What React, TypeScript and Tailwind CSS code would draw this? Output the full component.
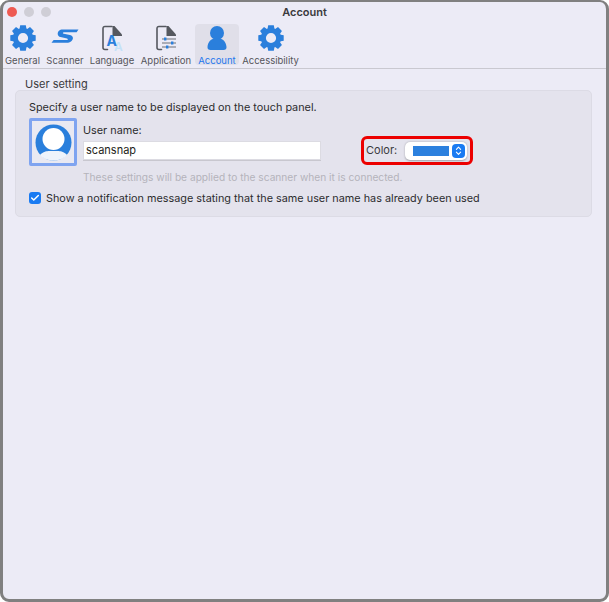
import { Check, ChevronDown, ChevronUp } from "lucide-react";

const BLUE = "#2a7fdc";

function GearIcon() {
  return (
    <svg width="26" height="26" viewBox="0 0 26 26">
      <g fill={BLUE}>
        {[0, 45, 90, 135, 180, 225, 270, 315].map((a) => (
          <path key={a} d="M10.2 0.3h5.6l1 5.5h-7.6z" transform={`rotate(${a} 13 13)`} />
        ))}
      </g>
      <circle cx="13" cy="13" r="7.6" fill="none" stroke={BLUE} strokeWidth="5" />
    </svg>
  );
}

function ScannerIcon() {
  return (
    <svg width="28" height="26" viewBox="0 0 28 26">
      <path
        d="M8 5.8C9 4.9 10 4.5 11.5 4.5H27.5L25.6 7.2H13C11.6 7.2 11.4 8.5 12.8 8.8L19 10C23 10.9 22.5 14.8 20 16.4C18.8 17.3 17.4 17.8 15.8 17.8H0.5L2.6 15.1H15.5C17 15.1 17.4 13.7 16 13.4L9.5 12.1C6.3 11.4 5.9 7.7 8 5.8Z"
        fill={BLUE}
      />
    </svg>
  );
}

function DocShape({ children }: { children: React.ReactNode }) {
  return (
    <svg width="28" height="28" viewBox="0 0 28 28">
      <path
        d="M9.5 25.5H7C5.7 25.5 5 24.8 5 23.5V4.5C5 3.2 5.7 2.5 7 2.5H14"
        fill="none"
        stroke="#55585f"
        strokeWidth="1.6"
        strokeLinecap="round"
      />
      <path d="M14.5 2H16.5L24 10.5V12H14.5Z" fill="#55585f" />
      {children}
    </svg>
  );
}

function LanguageIcon() {
  return (
    <DocShape>
      <text x="16" y="26.5" fontSize="12" fontWeight="600" fill="#c4e2f9" fontFamily="Inter, sans-serif">
        A
      </text>
      <text x="8.5" y="22" fontSize="14" fontWeight="700" fill={BLUE} fontFamily="Inter, sans-serif">
        A
      </text>
    </DocShape>
  );
}

function ApplicationIcon() {
  return (
    <DocShape>
      <path d="M10 15H24M10 19H24M10 23H24" stroke="#6d7077" strokeWidth="1.2" />
      <rect x="12" y="13.5" width="2.4" height="3" fill={BLUE} />
      <rect x="19" y="17.5" width="2.4" height="3" fill={BLUE} />
      <rect x="14" y="21.5" width="2.4" height="3" fill={BLUE} />
    </DocShape>
  );
}

function AccountIcon() {
  return (
    <svg width="28" height="28" viewBox="0 0 28 28">
      <circle cx="14" cy="9" r="7" fill={BLUE} />
      <path
        d="M7.5 26C5.5 26 4.3 24.9 4.5 23C4.9 18.5 7.5 14.8 11 14.8H17C20.5 14.8 23.1 18.5 23.5 23C23.7 24.9 22.5 26 20.5 26Z"
        fill={BLUE}
      />
    </svg>
  );
}

const TABS = [
  { label: "General", icon: <GearIcon />, width: "w-[35px]" },
  { label: "Scanner", icon: <ScannerIcon />, width: "w-[36px]" },
  { label: "Language", icon: <LanguageIcon />, width: "w-[44px]" },
  { label: "Application", icon: <ApplicationIcon />, width: "w-[50px]" },
  { label: "Account", icon: <AccountIcon />, width: "w-[44px] -mx-[3px]", active: true },
  { label: "Accessibility", icon: <GearIcon />, width: "w-[55px]" },
];

export default function App() {
  return (
    <div className="w-[609px] h-[602px] bg-white overflow-hidden font-['Inter',sans-serif]">
      <div className="w-full h-full border-[3px] border-[#808080] border-t-[2px] rounded-[9px] bg-[#ecebf6] flex flex-col">
        <div className="h-[67px] border-b border-[#c9c8d0] shrink-0 px-[2px] flex flex-col">
          <div className="relative h-[22px] flex items-start gap-[7px] pl-[2px] pt-[5px] shrink-0">
            <span className="w-[10px] h-[10px] rounded-full bg-[#ee5a52]" />
            <span className="w-[10px] h-[10px] rounded-full bg-[#cfced6]" />
            <span className="w-[10px] h-[10px] rounded-full bg-[#cfced6]" />
            <span className="absolute left-0 right-0 text-center text-[11px] leading-none font-semibold text-[#3a3a3d] top-[5px]">
              Account
            </span>
          </div>
          <div className="flex gap-[7px] items-start">
            {TABS.map((tab) => (
              <div
                key={tab.label}
                className={`flex flex-col items-center h-[41px] rounded-[4px] shrink-0 ${tab.width} ${tab.active ? "bg-[#e0dfe9]" : ""}`}
              >
                <div className="h-[28px] mb-[3px] flex items-center justify-center shrink-0">{tab.icon}</div>
                <span
                  className={`text-[9.5px] leading-[11px] whitespace-nowrap ${tab.active ? "text-[#1f77ee]" : "text-[#55555a]"}`}
                >
                  {tab.label}
                </span>
              </div>
            ))}
          </div>
        </div>

        <div className="pl-[12px] pr-[14px] pt-[9px]">
          <div className="pl-[10px] text-[11px] leading-[13px] text-[#3a3a3d]">User setting</div>
          <div className="mt-[-1px] h-[127px] rounded-[5px] border border-[#dcdbe5] bg-[#e4e3ed] pl-[13px] pt-[9px] pr-[10px]">
            <div className="text-[10.85px] leading-[14px] text-[#2c2c2e]">
              Specify a user name to be displayed on the touch panel.
            </div>
            <div className="flex mt-[4px]">
              <div className="w-[48px] h-[48px] shrink-0 rounded-[2px] border-[3px] border-[#7fa4f0] bg-[#e9e9f2] flex items-center justify-center">
                <svg width="37" height="37" viewBox="0 0 37 37">
                  <circle cx="18.5" cy="18.5" r="18" fill={BLUE} />
                  <circle cx="18.5" cy="15" r="11" fill="white" />
                  <path d="M5 31C8 27.5 12 27 14 27H23C25 27 29 27.5 32 31C28.5 35 23.5 36.5 18.5 36.5C13.5 36.5 8.5 35 5 31Z" fill="#eef3fb" />
                </svg>
              </div>
              <div className="ml-[6px] w-[238px] shrink-0">
                <div className="text-[10.85px] leading-[14px] text-[#2c2c2e] mt-[5px]">User name:</div>
                <div className="mt-[4px] h-[19px] bg-white border border-[#dcdbe2] shadow-[0_1px_0_#c8c7cf] flex items-center pl-[2px] text-[11px] text-[#1e1e20]">
                  scansnap
                </div>
              </div>
              <div className="ml-[40px] mt-[18px] w-[112px] h-[29px] rounded-[6px] border-[3px] border-[#ec0000] flex items-center pl-[2px]">
                <span className="text-[11px] text-[#3a3a3d]">Color:</span>
                <div className="ml-[8px] w-[62px] h-[18px] rounded-[5px] bg-white shadow-[0_0.5px_2px_rgba(0,0,0,0.3)] flex items-center pl-[8px] pr-[1px]">
                  <div className="w-[36px] h-[10px] bg-[#2c80de]" />
                  <div className="ml-[3px] w-[13px] h-[14px] rounded-[4px] bg-[#1a7bf2] flex flex-col items-center justify-center text-white">
                    <ChevronUp size={9} strokeWidth={3} className="-mb-[1.5px]" />
                    <ChevronDown size={9} strokeWidth={3} className="-mt-[1.5px]" />
                  </div>
                </div>
              </div>
            </div>
            <div className="mt-[4px] ml-[54px] text-[10.18px] leading-[14px] text-[#b4b3bb]">
              These settings will be applied to the scanner when it is connected.
            </div>
            <div className="flex items-center mt-[7px] gap-[5px]">
              <div className="w-[12px] h-[12px] rounded-[3px] bg-[#1a7bf2] flex items-center justify-center text-white">
                <Check size={10} strokeWidth={3.5} />
              </div>
              <span className="text-[10.85px] leading-[14px] text-[#2c2c2e]">
                Show a notification message stating that the same user name has already been used
              </span>
            </div>
          </div>
        </div>
      </div>
    </div>
  );
}
